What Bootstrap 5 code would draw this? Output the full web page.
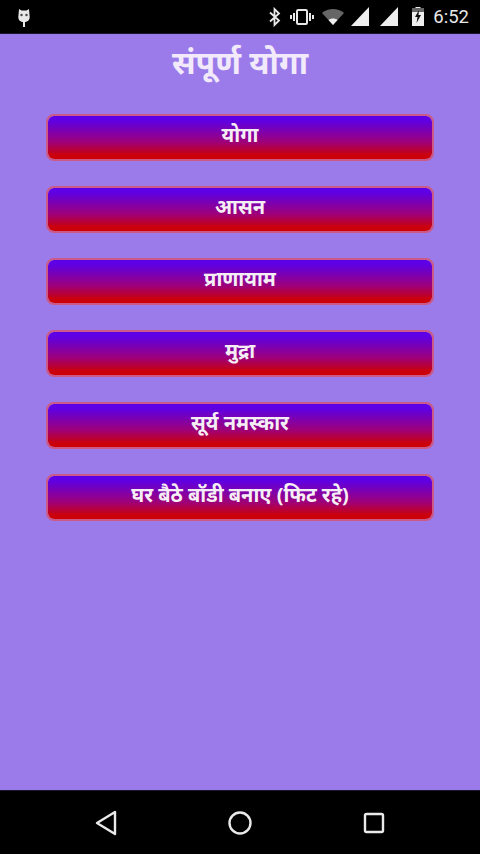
<!DOCTYPE html>
<html lang="hi">
<head>
<meta charset="utf-8">
<title>संपूर्ण योगा</title>
<link href="https://cdn.jsdelivr.net/npm/bootstrap@5.3.0/dist/css/bootstrap.min.css" rel="stylesheet">
<style>
html,body{height:854px;overflow:hidden;background:#9b7bea;font-family:"Noto Sans","Noto Sans Devanagari","Liberation Sans",sans-serif}
.status-strip{height:34px;background:#000;color:#eee;border-bottom:1px solid #1c1430}
.status-time{font:18.500px "Roboto",sans-serif;color:#e8e8e8;margin-left:8px;margin-right:11px}
.screen-body{height:756px;background:#9b7bea}
.page-heading{font-size:32px;font-weight:700;color:#f2eafb;line-height:38px;margin:0;padding-top:9px}
.yoga-list{width:388px;margin-top:33px;gap:25px}
.yoga-btn{height:47px;width:100%;padding:0 0 5px;border:2px solid #cc5a88;border-radius:8px;background:linear-gradient(180deg,#5a00ea 0%,#5f00e0 12%,#a00075 62%,#cc0008 92%) padding-box;color:#f6eef5;font-size:20px;font-weight:700;line-height:1.2}
.yoga-btn:hover{color:#f6eef5}
.nav-strip{height:64px;background:#000;border-top:1px solid #1c1430}
.nav-slot{width:134px}
.ic{display:block}
.owl-ic{margin-left:14px}
.gap-vib{margin-left:7px}
.gap-wifi{margin-left:6px}
.gap-sig{margin-left:5px}
.gap-sig2{margin-left:9px}
.gap-bat{margin-left:12px}
</style>
</head>
<body>
<header class="status-strip d-flex align-items-center">
  <svg class="ic owl-ic" width="20" height="24" viewBox="0 0 20 24"><path d="M5 4 7.500 5.500H12.500L15 4 15.500 10C16.500 15 13.500 17 11 17V22H9V17C6.500 17 3.500 15 4.500 10Z" fill="#e8e8e8"/><circle cx="7.500" cy="10" r="1.200" fill="#444"/><circle cx="12.500" cy="10" r="1.200" fill="#444"/></svg>
  <div class="d-flex align-items-center ms-auto">
    <svg class="ic" width="14" height="20" viewBox="0 0 14 20"><path d="M2 5.500 11 13.500 6.500 18V2L11 6.500 2 14.500" fill="none" stroke="#e8e8e8" stroke-width="1.800"/></svg>
    <svg class="ic gap-vib" width="26" height="18" viewBox="0 0 26 18"><rect x="8" y="2" width="10" height="14" rx="1.200" fill="none" stroke="#e8e8e8" stroke-width="2"/><path d="M5 5v8M21 5v8M2 7v4M24 7v4" stroke="#e8e8e8" stroke-width="2"/></svg>
    <svg class="ic gap-wifi" width="24" height="18" viewBox="0 0 24 18"><path d="M1 5C7-.5 17-.5 23 5L12 17Z" fill="#666"/><path d="M7.500 12C10 10 14 10 16.500 12L12 17Z" fill="#eee"/></svg>
    <svg class="ic gap-sig" width="20" height="19" viewBox="0 0 20 19"><path d="M19 0V19H1Z" fill="#eee"/></svg>
    <svg class="ic gap-sig2" width="20" height="19" viewBox="0 0 20 19"><path d="M19 0V19H1Z" fill="#eee"/></svg>
    <svg class="ic gap-bat" width="14" height="21" viewBox="0 0 14 21"><path d="M4.500 2V1H9.500V2H13V20H1V2Z" fill="#eee"/><path d="M1 2H13V6H1Z" fill="#666"/><path d="M8 4 4 11H6.500L5.500 17 10 9H7.500Z" fill="#111"/></svg>
    <span class="status-time">6:52</span>
  </div>
</header>
<main class="screen-body d-flex flex-column align-items-center">
  <h1 class="page-heading text-center">संपूर्ण योगा</h1>
  <div class="yoga-list d-flex flex-column">
    <button type="button" class="btn yoga-btn">योगा</button>
    <button type="button" class="btn yoga-btn">आसन</button>
    <button type="button" class="btn yoga-btn">प्राणायाम</button>
    <button type="button" class="btn yoga-btn">मुद्रा</button>
    <button type="button" class="btn yoga-btn">सूर्य नमस्कार</button>
    <button type="button" class="btn yoga-btn">घर बैठे बॉडी बनाए (फिट रहे)</button>
  </div>
</main>
<footer class="nav-strip d-flex align-items-center justify-content-center">
  <div class="nav-slot d-flex justify-content-center">
    <svg class="ic" width="24" height="26" viewBox="0 0 24 26"><path d="M21 2V24L3 13Z" fill="none" stroke="#eaeaea" stroke-width="2.400" stroke-linejoin="round"/></svg>
  </div>
  <div class="nav-slot d-flex justify-content-center">
    <svg class="ic" width="26" height="26" viewBox="0 0 26 26"><circle cx="13" cy="13" r="10.500" fill="none" stroke="#eaeaea" stroke-width="2.400"/></svg>
  </div>
  <div class="nav-slot d-flex justify-content-center">
    <svg class="ic" width="24" height="24" viewBox="0 0 24 24"><rect x="3" y="3" width="18" height="18" rx="1.500" fill="none" stroke="#eaeaea" stroke-width="2.400"/></svg>
  </div>
</footer>
<script src="https://cdn.jsdelivr.net/npm/bootstrap@5.3.0/dist/js/bootstrap.bundle.min.js"></script>
</body>
</html>
